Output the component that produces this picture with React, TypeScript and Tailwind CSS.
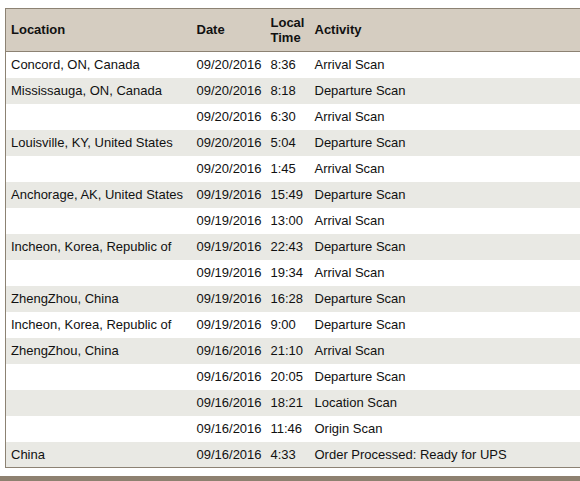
import React from "react";

const rows: [string, string, string, string][] = [
  ["Concord, ON, Canada", "09/20/2016", "8:36", "Arrival Scan"],
  ["Mississauga, ON, Canada", "09/20/2016", "8:18", "Departure Scan"],
  ["", "09/20/2016", "6:30", "Arrival Scan"],
  ["Louisville, KY, United States", "09/20/2016", "5:04", "Departure Scan"],
  ["", "09/20/2016", "1:45", "Arrival Scan"],
  ["Anchorage, AK, United States", "09/19/2016", "15:49", "Departure Scan"],
  ["", "09/19/2016", "13:00", "Arrival Scan"],
  ["Incheon, Korea, Republic of", "09/19/2016", "22:43", "Departure Scan"],
  ["", "09/19/2016", "19:34", "Arrival Scan"],
  ["ZhengZhou, China", "09/19/2016", "16:28", "Departure Scan"],
  ["Incheon, Korea, Republic of", "09/19/2016", "9:00", "Departure Scan"],
  ["ZhengZhou, China", "09/16/2016", "21:10", "Arrival Scan"],
  ["", "09/16/2016", "20:05", "Departure Scan"],
  ["", "09/16/2016", "18:21", "Location Scan"],
  ["", "09/16/2016", "11:46", "Origin Scan"],
  ["China", "09/16/2016", "4:33", "Order Processed: Ready for UPS"],
];

export default function App() {
  return (
    <div
      className="w-[580px] h-[481px] overflow-hidden bg-white flex flex-col text-[13px] text-[#111]"
      style={{ fontFamily: '"Liberation Sans", Arial, sans-serif' }}
    >
      <div className="pt-[8px] pl-[5px]">
        <table className="w-[600px] border-collapse table-fixed border-t border-l border-b border-[#8c8273]">
          <colgroup>
            <col className="w-[186px]" />
            <col className="w-[74px]" />
            <col className="w-[44px]" />
            <col />
          </colgroup>
          <thead>
            <tr className="bg-[#d5cdc1] h-[43px] border-b border-[#8c8273]">
              <th className="text-left font-bold px-[5px] align-middle">Location</th>
              <th className="text-left font-bold px-[5px] align-middle">Date</th>
              <th className="text-left font-bold px-[5px] align-middle leading-[15px] pb-[1px]">
                Local
                <br />
                Time
              </th>
              <th className="text-left font-bold px-[5px] align-middle">Activity</th>
            </tr>
          </thead>
          <tbody>
            {rows.map((r, i) => (
              <tr key={i} className={i % 2 === 1 ? "bg-[#e9e9e4] h-[26px]" : "bg-white h-[26px]"}>
                <td className="px-[5px] whitespace-nowrap">{r[0]}</td>
                <td className="px-[5px] whitespace-nowrap">{r[1]}</td>
                <td className="px-[5px] whitespace-nowrap">{r[2]}</td>
                <td className="px-[5px] whitespace-nowrap">{r[3]}</td>
              </tr>
            ))}
          </tbody>
        </table>
      </div>
      <div className="mt-[8px] h-[10px] bg-[#8e8170]" />
    </div>
  );
}
